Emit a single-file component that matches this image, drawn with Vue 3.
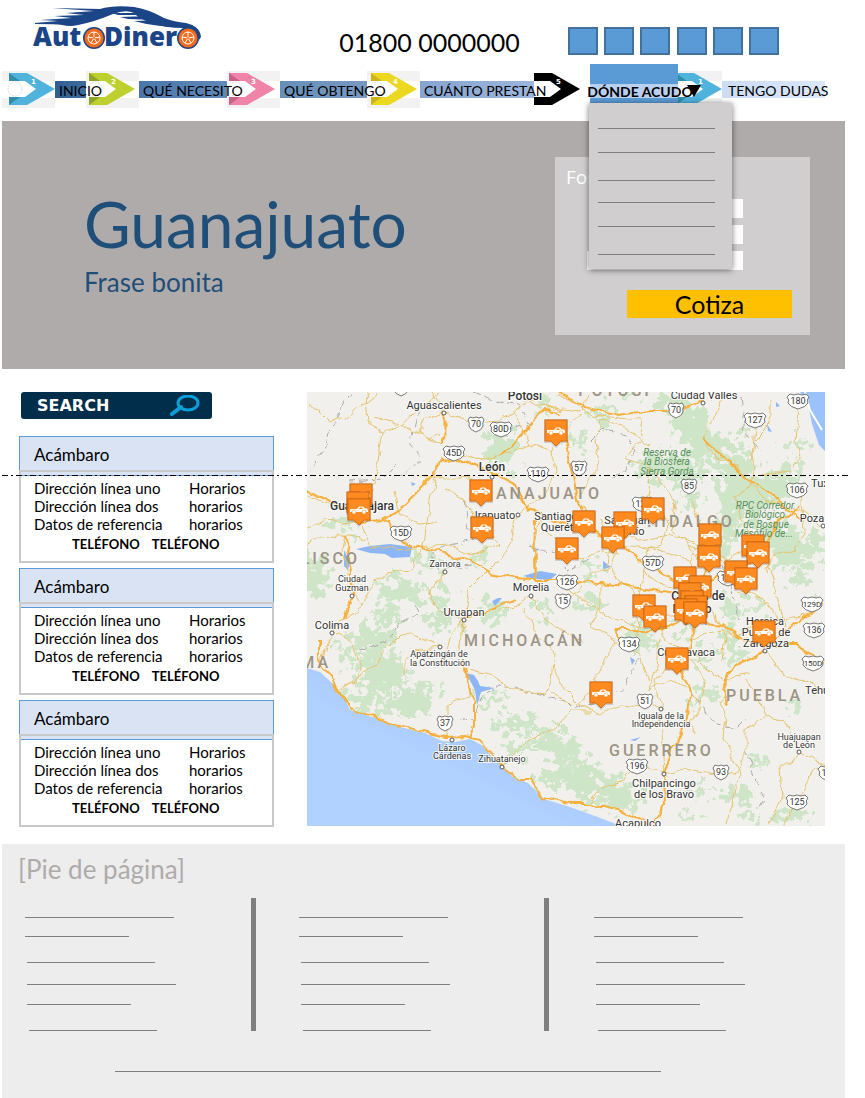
<script setup>
const steps = [
  { n: 1, label: 'INICIO', box: '0 0 53 37', main: '#4fb3dc', fold: '#2f8fa8', from: '#2f5f93', to: '#3f6b9c' },
  { n: 2, label: 'QUÉ NECESITO', box: '4 0 53 37', main: '#bdd02f', fold: '#8fa52a', from: '#4a76ab', to: '#6089b8' },
  { n: 3, label: 'QUÉ OBTENGO', box: '5 0 53 37', main: '#f083a8', fold: '#c9638a', from: '#668fb8', to: '#7898c2' },
  { n: 4, label: 'CUÁNTO PRESTAN', box: '3 0 53 37', main: '#ecd820', fold: '#cdb518', from: '#86a5d0', to: '#9cb6dd' },
  { n: 5, label: 'DÓNDE ACUDO', box: '7 0 46 37', main: '#000000', fold: '#000000', current: true },
  { n: 1, label: 'TENGO DUDAS', box: '9 0 44 37', main: '#4fb3dc', fold: '#2f8fa8', from: '#cbdcf5', to: '#dbe8fb' }
]
const menuRows = [1, 2, 3, 4, 5, 6]
const branches = [1, 2, 3]
const socials = [1, 2, 3, 4, 5, 6]
const footerCols = [1, 2, 3]

const pins = [
  [556, 419], [481, 479], [482, 516], [361, 483], [358, 491], [359, 498], [567, 537], [584, 510],
  [625, 511], [613, 526], [653, 497], [710, 523], [709, 545], [753, 534], [758, 541], [736, 560],
  [746, 567], [685, 566], [700, 575], [690, 582], [692, 590], [696, 595], [686, 598], [695, 601],
  [644, 594], [655, 605], [764, 620], [677, 647], [601, 681]
]

const shields = [
  [401, 388, '54'], [476, 424, '70'], [501, 429, '80D'], [454, 453, '45D'], [538, 474, '110'], [401, 533, '15D'],
  [676, 410, '70'], [798, 401, '180'], [755, 420, '127'], [579, 468, '57'], [689, 486, '85'], [643, 504, '120'],
  [797, 490, '106'], [653, 563, '57D'], [567, 582, '126'], [563, 601, '15'], [728, 578, '132'], [812, 604, '129D'],
  [814, 630, '136'], [813, 663, '150D'], [629, 644, '134'], [645, 701, '51'], [445, 723, '37'],
  [637, 766, '196'], [721, 772, '93'], [797, 802, '125'], [829, 773, '190']
]

const regions = [
  [615, 396, 'POTOSÍ', 'middle'], [496, 499, 'ANAJUATO', 'start'], [647, 527, 'HIDALGO', 'start'],
  [360, 564, 'JALISCO', 'end'], [464, 646, 'MICHOACÁN', 'start'], [331, 668, 'COLIMA', 'end'],
  [726, 701, 'PUEBLA', 'start'], [609, 756, 'GUERRERO', 'start']
]

const places = [
  [525, 400, 'Potosí', 'lg'], [444, 409, 'Aguascalientes', 'md'], [704, 399, 'Ciudad Valles', 'md'],
  [492, 471, 'León', 'xl'], [362, 510, 'Guadalajara', 'xl'], [495, 519, 'Irapuato', 'md'],
  [556, 520, 'Santiago', 'md'], [565, 531, 'Querétaro', 'md'], [627, 524, 'San Juan', 'md'], [628, 535, 'del Río', 'md'],
  [445, 567, 'Zamora', 'sm'], [352, 582, 'Ciudad', 'sm'], [352, 591, 'Guzman', 'sm'], [531, 591, 'Morelia', 'md'],
  [464, 616, 'Uruapan', 'md'], [332, 629, 'Colima', 'md'], [439, 657, 'Apatzingán de', 'xs'], [440, 666, 'la Constitución', 'xs'],
  [452, 751, 'Lázaro', 'sm'], [452, 759, 'Cárdenas', 'sm'], [502, 762, 'Zihuatanejo', 'sm'],
  [698, 600, 'Ciudad de', 'xl'], [692, 613, 'México', 'xl'], [765, 625, 'Heroica', 'md'], [766, 636, 'Puebla de', 'md'],
  [766, 647, 'Zaragoza', 'md'], [686, 656, 'Cuernavaca', 'md'], [661, 719, 'Iguala de la', 'sm'], [661, 727, 'Independencia', 'sm'],
  [799, 740, 'Huajuapan', 'sm'], [799, 748, 'de León', 'sm'], [664, 787, 'Chilpancingo', 'md'], [664, 798, 'de los Bravo', 'md'],
  [638, 827, 'Acapulco', 'md'], [829, 487, 'Tuxpan', 'md'], [824, 522, 'Poza Rica', 'md'], [829, 694, 'Tehuacán', 'md']
]

const parks = [
  [667, 456, 'Reserva de'], [667, 465, 'la Biosfera'], [667, 475, 'Sierra Gorda'],
  [765, 509, 'RPC Corredor'], [765, 518, 'Biológico'], [766, 528, 'de Bosque'], [764, 537, 'Mesófilo de...']
]

const dots = [
  [444, 413], [703, 403], [492, 477], [518, 515], [445, 572], [352, 596], [531, 596], [464, 620], [332, 633],
  [440, 647], [452, 740], [502, 767], [765, 651], [661, 709], [799, 752], [664, 774], [823, 526]
]

const greens = [
  [500, 450, 15, 20], [543, 399, 9, 9], [315, 573, 14, 20], [350, 518, 18, 10], [400, 592, 24, 12], [440, 598, 12, 10],
  [370, 640, 22, 14], [383, 672, 26, 20], [365, 700, 20, 12], [410, 703, 26, 12], [345, 655, 10, 10], [388, 615, 14, 10],
  [440, 622, 16, 8], [495, 610, 14, 8], [545, 608, 10, 8], [590, 605, 12, 8], [420, 690, 18, 8], [490, 700, 16, 6],
  [515, 723, 22, 7], [545, 733, 16, 8], [520, 748, 18, 7], [560, 750, 20, 12], [575, 775, 26, 14], [600, 790, 28, 14],
  [545, 780, 14, 6], [625, 800, 16, 10], [670, 402, 14, 10], [690, 422, 16, 20], [710, 446, 20, 16], [735, 462, 20, 14],
  [672, 470, 36, 12], [650, 463, 14, 8], [735, 490, 20, 20], [765, 490, 24, 14], [790, 475, 12, 10], [728, 530, 8, 22],
  [748, 508, 16, 14], [778, 535, 22, 10], [792, 552, 20, 12], [800, 575, 14, 8], [818, 545, 10, 12], [730, 608, 9, 10],
  [730, 640, 9, 20], [735, 655, 8, 9], [640, 640, 16, 12], [655, 622, 12, 8], [686, 640, 10, 8], [700, 662, 12, 6],
  [755, 605, 8, 9], [593, 572, 6, 9], [603, 415, 10, 7], [575, 440, 8, 5], [690, 500, 8, 10], [700, 790, 10, 4],
  [735, 795, 16, 7], [760, 762, 9, 5], [790, 815, 18, 7], [702, 695, 14, 8], [795, 705, 12, 5], [745, 430, 8, 6],
  [800, 445, 8, 6], [428, 560, 16, 6], [478, 560, 8, 5], [630, 390, 8, 6], [752, 818, 8, 7], [690, 815, 8, 5]
]

const minorRoads = [
  'M307 405 L318 412 328 422 340 416 352 418 362 405 372 398 375 392', 'M366 392 L368 425 383 433 380 450 374 480 370 500',
  'M383 433 L402 425 420 405 440 395', 'M372 416 L400 424 M402 425 L430 440 444 447', 'M307 494 L322 502 340 508 355 515',
  'M307 528 L325 520 345 522 360 520', 'M307 545 L320 538 340 536 350 536 365 540', 'M345 536 L342 548 352 590 362 606',
  'M362 525 L370 545 400 550 430 546', 'M420 490 L432 478 444 460', 'M438 466 L430 500 426 530 424 547', 'M420 478 L458 478 480 480',
  'M432 392 L444 413 444 447', 'M444 413 L424 420 418 432 430 440 440 435', 'M444 413 L470 422 500 420 515 412',
  'M454 447 L470 458 482 462 502 455', 'M515 412 L545 392', 'M515 412 L530 445 552 452 565 430 582 415', 'M552 452 L556 470 545 495 520 512',
  'M530 445 L500 455', 'M520 392 L535 405 578 412 590 392', 'M600 420 L596 440 600 460 590 480 575 500 590 515', 'M600 420 L625 428 650 445',
  'M518 515 L510 540 500 560 485 575 470 590 464 620', 'M540 515 L535 545 536 580', 'M424 547 L410 570 385 573 370 590 362 606',
  'M424 547 L450 545 470 555 500 545', 'M445 572 L430 590 433 605 445 612 464 620', 'M464 620 L450 640 445 660', 'M464 620 L462 650 465 668 470 690',
  'M332 633 L345 620 362 606', 'M332 633 L325 650 320 665', 'M332 633 L350 640 360 670 355 680 340 690', 'M340 690 L360 675 378 665 385 650 400 635 410 634 440 647',
  'M440 647 L415 650 406 662 406 676', 'M470 690 L468 697 447 705 447 738', 'M470 670 L490 675 515 690 545 695 552 680 555 650 540 640 525 610',
  'M531 596 L520 605 500 612', 'M531 596 L545 620 560 630 585 640', 'M555 667 L565 690 580 705 600 715 620 705 661 709', 'M552 690 L575 708',
  'M502 767 L530 740 555 728 570 712 590 712', 'M577 708 L590 690 605 660 615 640 590 625', 'M567 588 L590 605 612 620 640 625 660 615 680 615',
  'M563 601 L580 590 590 575 610 565', 'M610 565 L620 585 635 590 637 635', 'M560 395 L590 415 640 420', 'M640 418 L645 440 625 455 650 465 648 490 640 520',
  'M653 510 L668 520 662 545 645 550 640 600', 'M650 470 L675 500 672 530 690 545 697 560', 'M690 500 L700 520 705 545', 'M727 392 L715 415 705 440 715 458 735 465 750 482',
  'M755 430 L752 455 755 475 750 485 735 495 742 520 755 540', 'M798 410 L795 440 802 455 790 470 760 475', 'M755 440 L770 425 770 400', 'M750 482 L765 500 800 510 823 526',
  'M800 485 L805 530 795 550 775 555 765 570', 'M765 555 L775 590 785 625', 'M690 545 L720 560 740 575', 'M640 520 L620 545 610 565',
  'M661 709 L655 680 670 660 677 650', 'M664 774 L640 765 625 780 600 790 590 803', 'M664 774 L662 740 658 715', 'M690 660 L705 680 700 710 690 725 695 735',
  'M727 680 L720 700 727 715 725 740 735 760 742 775 735 790 725 826', 'M664 774 L685 770 705 773 735 775 745 755 745 730 765 715 760 700 745 680',
  'M765 715 L790 725 799 752 790 765 780 765 782 800 770 826', 'M799 752 L825 765', 'M785 826 L800 795 815 770 825 765', 'M765 651 L780 670 800 680 825 690',
  'M690 640 L720 630 735 635 765 625', 'M690 645 L705 668 725 680 750 675', 'M660 640 L655 670 650 690', 'M615 640 L640 655 650 680', 'M697 600 L715 615 725 640 722 660',
  'M740 590 L765 600 780 620', 'M785 620 L805 615 825 605', 'M580 560 L600 552 620 555', 'M600 520 L610 540 605 565', 'M566 560 L560 545 545 530',
  'M395 490 L400 515 420 525 440 522', 'M444 490 L465 500 480 525 500 545', 'M600 583 L600 610 590 625', 'M625 545 L660 550 690 560', 'M610 530 L640 540 670 535 700 545',
  'M640 570 L660 585 690 590', 'M650 600 L665 640 690 650', 'M700 545 L690 560 697 600 M710 550 L725 560 740 550 760 545', 'M650 690 L670 680 690 690 700 705'
]
const majorRoads = [
  'M333 684 L345 695 350 709 380 718 400 726 420 731 445 737 465 736 480 740 495 760 520 778 530 778 543 797 570 803 590 803 620 810 650 826',
  'M380 520 L402 508 430 480 444 462 460 458 490 472 515 485 530 510 560 525 590 530 625 545 650 570 675 580',
  'M444 447 L445 413 M502 455 L530 425 545 410 560 412', 'M360 522 L383 520 410 545 440 552 470 560 495 575 530 580 565 580 600 583 640 588 690 595',
  'M466 668 L470 690 475 700 475 725 470 738', 'M464 620 L490 610 515 600', 'M565 440 L572 470 577 500 584 515', 'M307 490 L330 502 358 518',
  'M535 520 L534 560 535 580', 'M320 640 L320 665 340 690 348 705', 'M620 640 L615 630 660 630 690 615', 'M693 620 L690 650 680 670 690 690 688 720 672 750 664 774 665 805 655 826',
  'M690 620 L720 625 750 640 765 645 795 645 825 660', 'M765 645 L800 620 825 605', 'M690 590 L730 570 760 560 775 525 800 505', 'M765 651 L730 670 722 690 727 705',
  'M345 536 L350 555 352 596 345 620', 'M560 392 L575 404 620 415 650 410 680 410 703 400', 'M705 440 L720 455 750 480 765 490 800 520', 'M697 600 L705 575 710 550'
]
const borders = [
  'M350 392 L340 410 330 430 325 450 310 470', 'M420 410 L410 440 420 460 400 475', 'M475 392 L500 402 520 405 530 425 500 430', 'M350 482 L380 480 395 465',
  'M465 500 L472 540 450 545 430 555 M430 555 L440 570 470 565', 'M360 650 L390 640 400 622 420 612 415 600', 'M460 722 L475 718 482 695 500 685 540 695 565 700 575 710 605 700',
  'M590 440 L600 430 625 435 635 450 620 475 610 480', 'M530 545 L560 555 565 570 590 560', 'M740 400 L745 430 760 450', 'M700 540 L720 560 735 600 740 620',
  'M690 690 L705 710 715 725 735 730 745 720', 'M745 750 L755 775 765 800 760 810', 'M640 660 L620 690 610 690'
]
const footerLines = ['wide', 'short', 'mid', 'wide', 'short', 'mid']
</script>

<template>
  <div class="page">
    <header>
      <div class="masthead">
        <a class="logo" href="#" aria-label="AutoDinero">
          <svg viewBox="30 4 176 46" width="176" height="46">
            <g fill="#1b4586">
              <path d="M35 23 L58 21 L40 20 L72 18 L54 16 L84 15 L66 13 L94 11 L52 8 L100 9 Q114 5 134 7 Q148 9 164 18 Q174 22 186 23 Q200 26 201 37 L199 40 Q196 30 184 28 Q164 28 151 23 Q138 18 134 13 Q126 9 113 14 Q94 22 78 25 Q70 27 62 25 Q56 24 35 24 Z" />
              <path d="M112 13 L146 13 142 15 118 15 Z M120 17 L150 16 158 20 128 19 Z M134 21 L162 20 184 27 Q155 27 134 21 Z" />
              <text x="33" y="46" class="brand">Aut</text>
              <text x="104" y="46" class="brand">Diner</text>
            </g>
            <g v-for="x in [94, 188]" :key="x">
              <circle :cx="x" cy="38" r="11" fill="#1b4586" />
              <circle :cx="x" cy="38" r="9.5" fill="#f26a1b" />
              <circle :cx="x" cy="38" r="6" fill="none" stroke="#fff" stroke-width="1" />
              <path :transform="`translate(${x} 38)`" d="M0 0 V-6 M0 0 L6 -1 M0 0 L3 5 M0 0 L-3 5 M0 0 L-6 -1" stroke="#fff" fill="none" />
              <circle :cx="x" cy="38" r="1" fill="#f26a1b" />
            </g>
          </svg>
        </a>
        <p class="phone">01800 0000000</p>
        <div class="socials"><a v-for="s in socials" :key="s" href="#" :aria-label="'Red social ' + s"></a></div>
      </div>

      <nav>
        <div v-for="(s, i) in steps" :key="i" class="step" :class="{ current: s.current, last: i === 5 }">
          <svg class="arrow" :viewBox="s.box">
            <rect v-if="!s.current" width="60" height="37" fill="#f2f2f2" />
            <rect v-if="!s.current" y="10" width="60" height="17" fill="#fff" />
            <path d="M7 2 H25 L53 18 25 34 H7 V26 H23 L34 18 23 10 H7 Z" :fill="s.main" />
            <path v-if="!s.current" d="M7 2 L18 10 H7 Z M7 34 L18 26 H7 Z" :fill="s.fold" />
            <circle v-if="!s.current" cx="13" cy="18" r="7" fill="none" stroke="#ddd" stroke-dasharray="2 1" />
            <text x="29" y="13" class="num">{{ s.n }}</text>
          </svg>
          <a v-if="!s.current" href="#" class="label" :style="{ backgroundImage: `linear-gradient(90deg, ${s.from}, ${s.to})` }">{{ s.label }}</a>
          <div v-else class="tab">
            <a href="#" class="tab-label">{{ s.label }}</a>
            <svg class="caret" width="14" height="12" viewBox="0 0 14 12"><path d="M0 0 H14 L7 12 Z" /></svg>
            <ul class="menu"><li v-for="r in menuRows" :key="r"><a href="#" :aria-label="'Opción ' + r"></a></li></ul>
          </div>
        </div>
      </nav>
    </header>

    <section class="hero">
      <div class="headline">
        <h1>Guanajuato</h1>
        <p>Frase bonita</p>
      </div>
      <form class="quote" @submit.prevent>
        <h2>Formulario</h2>
        <input type="text" aria-label="Nombre">
        <input type="text" aria-label="Correo">
        <input class="full" type="text" aria-label="Ciudad">
        <button type="submit">Cotiza</button>
      </form>
    </section>

    <main>
      <div class="fold-line"></div>
      <aside>
        <button class="search" type="button">
          <span>SEARCH</span>
          <svg width="30" height="21" viewBox="0 0 30 21" fill="none" stroke="#0a9fd8"><ellipse cx="18" cy="8" rx="10" ry="7" stroke-width="3" /><path d="M11 12 L2 19" stroke-width="4" stroke-linecap="round" /></svg>
        </button>
        <article v-for="b in branches" :key="b" class="card">
          <h3>Acámbaro</h3>
          <div class="card-body">
            <div class="info">
              <span>Dirección línea uno</span><span>Horarios</span>
              <span>Dirección línea dos</span><span>horarios</span>
              <span>Datos de referencia</span><span>horarios</span>
            </div>
            <div class="phones"><b>TELÉFONO</b><b>TELÉFONO</b></div>
          </div>
        </article>
      </aside>

      <svg class="map" viewBox="307 392 518 434" preserveAspectRatio="xMidYMid slice" role="img" aria-label="Mapa de sucursales">
        <defs>
          <filter id="rough" x="-5%" y="-5%" width="110%" height="110%"><feTurbulence type="fractalNoise" baseFrequency="0.1" numOctaves="4" seed="4" /><feDisplacementMap in="SourceGraphic" scale="46" xChannelSelector="R" yChannelSelector="G" /></filter>
          <filter id="wiggle" x="-5%" y="-5%" width="110%" height="110%"><feTurbulence type="fractalNoise" baseFrequency="0.06" numOctaves="3" seed="9" /><feDisplacementMap in="SourceGraphic" scale="10" xChannelSelector="R" yChannelSelector="G" /></filter>
          <linearGradient id="sea" x1="0" y1="1" x2="1" y2="0"><stop offset="0.4" stop-color="#b1d1ff" /><stop offset="1" stop-color="#8fbafa" /></linearGradient>
          <g id="pin">
            <path d="M-12 0 H12 V24 H5 L0 29 -5 24 H-12 Z" fill="#000" opacity="0.15" />
            <path d="M-11 1 H11 V22 H5 L0 27 -5 22 H-11 Z" fill="#ff8a1f" stroke="#d96b10" />
            <path d="M-9 11 H-2 L0 8.500 H4 L6 10.500 H8 L9 12 V14 H-9 Z" fill="#fff" />
            <circle cx="-5" cy="14" r="2" fill="#fff" stroke="#ff8a1f" stroke-width="0.5" /><circle cx="5" cy="14" r="2" fill="#fff" stroke="#ff8a1f" stroke-width="0.5" />
            <path d="M0 11 L1 9.500 H3 L4 11 Z" fill="#ff8a1f" />
          </g>
        </defs>
        <rect x="307" y="392" width="518" height="434" fill="#f2f0ec" />
        <g fill="#cfe5c8" filter="url(#rough)"><ellipse v-for="(g, i) in greens" :key="i" :cx="g[0]" :cy="g[1]" :rx="g[2]" :ry="g[3]" /></g>
        <path fill="url(#sea)" d="M307 668 L320 672 332 683 344 697 350 710 378 719 400 727 425 733 442 741 455 742 470 739 483 746 493 758 506 769 513 777 528 783 544 799 570 807 595 816 621 826 H307 Z" />
        <path fill="#9cc2fb" d="M800 392 L808 404 812 424 819 445 825 451 V392 Z" />
        <path d="M805 392 L810 410 822 430" fill="none" stroke="#fff" stroke-width="2" />
        <g fill="#8cb6f8">
          <path d="M356 549 L370 546 390 544 412 547 410 557 392 558 385 554 370 553 Z" />
          <path d="M523 576 L540 571 557 574 550 580 535 579 Z M492 601 L498 598 502 598 495 606 Z M466 673 L474 675 478 681 480 686 495 688 481 692 477 705 475 690 Z M344 550 L350 562 348 570 344 566 Z M630 740 L641 737 635 741 Z M767 424 L772 432 768 431 Z M532 548 L540 549 534 552 Z M603 561 L611 567 603 569 Z" />
          <path d="M630 657 L635 660 632 665 Z M705 619 L710 624 705 625 Z M776 402 L780 406 776 407 Z M411 482 L416 484 412 486 Z" />
        </g>
        <g fill="none" stroke-linejoin="round">
          <g stroke="#aaaaaa" stroke-dasharray="7 4"><path v-for="(d, i) in borders" :key="i" :d="d" filter="url(#wiggle)" /></g>
          <g stroke="#e6c36c" filter="url(#wiggle)"><path v-for="(d, i) in minorRoads" :key="i" :d="d" /></g>
          <g stroke="#f6b03c" stroke-width="2" filter="url(#wiggle)"><path v-for="(d, i) in majorRoads" :key="i" :d="d" /></g>
        </g>
        <g class="region"><text v-for="(r, i) in regions" :key="i" :x="r[0]" :y="r[1]" :text-anchor="r[3]">{{ r[2] }}</text></g>
        <g v-for="(s, i) in shields" :key="i" :transform="`translate(${s[0]} ${s[1]})`">
          <path :d="s[2].length > 2 ? 'M-8 -7 Q-4 -5 0 -7 Q4 -5 8 -7 L11 -4 Q8 -1 10 2 Q8 6 0 8 Q-8 6 -10 2 Q-8 -1 -11 -4 Z' : 'M-6 -7 Q-3 -5 0 -7 Q3 -5 6 -7 L8 -4 Q6 -1 7 2 Q6 6 0 8 Q-6 6 -7 2 Q-6 -1 -8 -4 Z'" fill="#fff" stroke="#777" />
          <text y="3" class="route" :class="{ long: s[2].length > 3 }">{{ s[2] }}</text>
        </g>
        <g fill="#fff" stroke="#555"><circle v-for="(d, i) in dots" :key="i" :cx="d[0]" :cy="d[1]" r="2" /></g>
        <g class="park"><text v-for="(p, i) in parks" :key="i" :x="p[0]" :y="p[1]">{{ p[2] }}</text></g>
        <g class="place"><text v-for="(p, i) in places" :key="i" :x="p[0]" :y="p[1]" :class="p[3]">{{ p[2] }}</text></g>
        <use v-for="(p, i) in pins" :key="i" href="#pin" :x="p[0]" :y="p[1]" />
      </svg>
    </main>

    <footer>
      <h2>[Pie de página]</h2>
      <div class="columns">
        <ul v-for="c in footerCols" :key="c">
          <li v-for="(l, i) in footerLines" :key="i" :class="l"><a href="#" :aria-label="'Enlace ' + (i + 1)"></a></li>
        </ul>
      </div>
      <hr>
    </footer>
  </div>
</template>

<style>
body { margin: 0; background: #fff; }
</style>

<style scoped>
* { box-sizing: border-box; margin: 0; padding: 0; }
.page { margin: 0 20px 0 2px; font-family: Lato, "Open Sans", sans-serif; color: #000; }
a { color: inherit; text-decoration: none; }
ul { list-style: none; }
svg { display: block; }

.masthead { display: grid; grid-template-columns: 176px 1fr 211px; padding: 4px 66px 0 28px; height: 71px; }
.logo svg { overflow: visible; }
.brand { font: 800 26px "Open Sans", sans-serif; }
.phone { padding: 23px 0 0 85px; font-size: 25px; line-height: 30px; text-align: center; white-space: nowrap; }
.socials { display: flex; justify-content: space-between; padding-top: 23px; }
.socials a { width: 30px; height: 28px; background: #5b9bd5; border: 2px solid #41719c; }

nav { display: grid; grid-template-columns: 84fr 141fr 140fr 167fr 144fr 167fr; height: 50px; }
.step { display: flex; align-items: flex-start; min-width: 0; }
.arrow { width: 53px; height: 37px; flex: none; }
.num { font: 700 7px "DejaVu Sans", sans-serif; fill: #fff; }
.label { position: relative; z-index: 1; flex: 1; min-width: 0; height: 17px; margin-top: 10px; padding-left: 4px; font-size: 14px; line-height: 20px; white-space: nowrap; }
.last .arrow { width: 44px; }
.last .label { margin-right: 20px; padding-left: 6px; }
.current .arrow { width: 46px; }
.tab { position: relative; z-index: 3; flex: 1; min-width: 0; height: 40px; margin: -7px 0 0 10px; padding-top: 20px; background: #5b9bd5; }
.tab-label { display: flex; justify-content: center; height: 14px; padding-left: 12px; background: #b9d0f0; font-size: 14px; font-weight: 700; line-height: 16px; white-space: nowrap; }
.caret { position: absolute; left: calc(100% + 9px); top: 21px; }
.menu { position: absolute; top: 39px; left: -1px; width: 143px; height: 166px; padding: 1px 17px 14px 9px; background: #d0cece; box-shadow: 0 1px 6px rgba(0, 0, 0, 0.55); }
.menu li { height: 24px; border-bottom: 1px solid #7f7f7f; }
.menu li:nth-child(1) { height: 25px; }
.menu li:nth-child(3n) { height: 28px; }
.menu li:nth-child(4) { height: 22px; }
.menu a { display: block; height: 20px; }

.hero { display: flex; justify-content: space-between; height: 248px; padding: 36px 35px 34px 82px; background: #afabaa; }
.headline { color: #1f4e79; padding-top: 29px; }
h1 { font-size: 64px; font-weight: 400; line-height: 76px; }
.headline p { font-size: 26px; line-height: 40px; }
.quote { display: flex; flex-direction: column; align-items: flex-end; width: 255px; padding: 6px 67px 17px 11px; background: #d0cece; }
.quote h2 { align-self: flex-start; color: #fff; font: 500 19px/28px "Open Sans", sans-serif; margin-bottom: 8px; }
.quote input { width: 152px; height: 19px; margin-bottom: 7px; border: 0; background: #fff; font: 14px Lato, sans-serif; }
.quote .full { width: 156px; }
.quote button { width: 165px; height: 28px; margin: auto -49px 0 0; border: 0; background: #ffc000; font: 25px/28px Lato, sans-serif; color: #000; }

main { position: relative; display: flex; gap: 33px; padding: 23px 20px 17px 17px; }
.fold-line { position: absolute; z-index: 2; left: 0; right: -3px; top: 106px; height: 1px; background: repeating-linear-gradient(90deg, #000 0 6px, transparent 6px 9px, #000 9px 11px, transparent 11px 14px); }
aside { width: 255px; flex: none; }
.search { display: flex; align-items: center; justify-content: space-between; width: 191px; height: 27px; margin: 0 2px 17px; padding: 0 12px 0 16px; border: 0; border-radius: 3px; background: #002e4b; color: #fff; font: 700 16px "DejaVu Sans", sans-serif; }
.card + .card { margin-top: 5px; }
h3 { height: 34px; padding-left: 14px; border: 1px solid #5b9bd5; border-bottom: 0; background: #dae3f3; font-size: 17px; font-weight: 400; line-height: 36px; }
.card-body { position: relative; height: 93px; border: 2px solid #c9c9c9; padding: 8px 0 0 13px; }
.card-body::before { content: ""; display: block; height: 3px; margin: -8px 0 3px -13px; background: #dae3f3; border-bottom: 1px solid #5b9bd5; }
.info { display: grid; grid-template-columns: 155px 1fr; font-size: 15px; line-height: 18px; }
.phones { display: flex; gap: 12px; padding-left: 38px; font-size: 13px; line-height: 22px; }

.map { flex: 1; min-width: 0; height: 434px; }
.map text { font-family: Roboto, sans-serif; }
.region { fill: #9c9484; font-size: 16px; font-weight: 500; letter-spacing: 3px; }
.route { font-size: 9px; text-anchor: middle; fill: #333; }
.long { font-size: 8px; }
.park { font-size: 10px; font-style: italic; text-anchor: middle; fill: #56905c; }
.place { text-anchor: middle; fill: #333; stroke: #fff; stroke-width: 2px; paint-order: stroke; stroke-opacity: 0.8; }
.xs { font-size: 9px; }
.sm { font-size: 9px; }
.md { font-size: 11px; }
.lg { font-size: 12px; font-weight: 500; }
.xl { font-size: 12px; font-weight: 500; }

footer { min-height: 254px; padding: 8px 0 26px 16px; background: #ededed; }
footer h2 { color: #afabab; font-size: 26px; font-weight: 400; line-height: 34px; }
.columns { display: grid; grid-template-columns: 233fr 293fr 301fr; margin-top: 12px; height: 132px; }
.columns ul { padding: 19px 0 0 7px; }
.columns ul + ul { padding-left: 43px; border-left: 5px solid #7f7f7f; }
.columns ul:last-child { padding-left: 45px; }
.columns li { height: 1px; margin-bottom: 21px; background: #7f7f7f; }
.columns a { display: block; height: 12px; }
.wide { width: 149px; }
.short { width: 104px; }
.mid { width: 128px; }
.columns li:nth-child(1) { margin-bottom: 18px; }
.columns li:nth-child(2), .columns li:nth-child(5) { margin-bottom: 25px; }
.columns li:nth-child(4) { margin-bottom: 19px; }
.columns li:nth-child(n + 3) { margin-left: 2px; }
.columns li:nth-child(6) { margin-left: 4px; margin-bottom: 0; }
hr { width: 66%; margin: 41px 0 0 97px; border: 0; height: 1px; background: #7f7f7f; }
</style>
